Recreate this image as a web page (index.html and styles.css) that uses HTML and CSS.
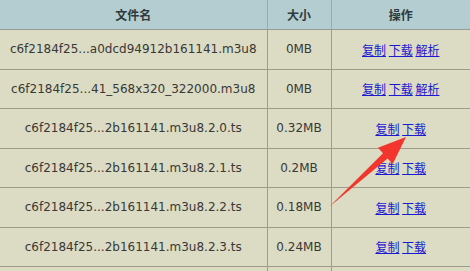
FILE: index.html
```html
<!DOCTYPE html>
<html lang="zh">
<head>
<meta charset="utf-8">
<link rel="stylesheet" href="styles.css">
</head>
<body>
<div class="wrap">
<table class="files">
  <colgroup><col class="c-name"><col class="c-size"><col class="c-op"></colgroup>
  <thead>
    <tr><th>文件名</th><th>大小</th><th>操作</th></tr>
  </thead>
  <tbody>
    <tr><td>c6f2184f25...a0dcd94912b161141.m3u8</td><td>0MB</td><td class="ops"><a href="#">复制</a> <a href="#">下载</a> <a href="#">解析</a></td></tr>
    <tr><td>c6f2184f25...41_568x320_322000.m3u8</td><td>0MB</td><td class="ops"><a href="#">复制</a> <a href="#">下载</a> <a href="#">解析</a></td></tr>
    <tr><td>c6f2184f25...2b161141.m3u8.2.0.ts</td><td>0.32MB</td><td class="ops"><a href="#">复制</a> <a href="#">下载</a></td></tr>
    <tr><td>c6f2184f25...2b161141.m3u8.2.1.ts</td><td>0.2MB</td><td class="ops"><a href="#">复制</a> <a href="#">下载</a></td></tr>
    <tr><td>c6f2184f25...2b161141.m3u8.2.2.ts</td><td>0.18MB</td><td class="ops"><a href="#">复制</a> <a href="#">下载</a></td></tr>
    <tr><td>c6f2184f25...2b161141.m3u8.2.3.ts</td><td>0.24MB</td><td class="ops"><a href="#">复制</a> <a href="#">下载</a></td></tr>
    <tr><td></td><td></td><td></td></tr>
  </tbody>
</table>
<svg class="arrow" width="470" height="271" viewBox="0 0 470 271">
  <polygon points="329,207 383,153.2 377.9,147.7 406,137 392.7,163.9 387.6,158.4" fill="#f2362e"/>
</svg>
</div>
</body>
</html>
```
FILE: styles.css
```css
html, body {
  margin: 0;
  padding: 0;
  background: #dcdbc3;
  overflow: hidden;
}
.wrap {
  position: relative;
  width: 470px;
  height: 271px;
  overflow: hidden;
}
.files {
  width: 470px;
  border-collapse: collapse;
  table-layout: fixed;
  font-family: "DejaVu Sans", "Noto Sans CJK SC", sans-serif;
  font-size: 12px;
  color: #383838;
}
.c-name { width: 267px; }
.c-size { width: 64px; }
.c-op { width: 139px; }
.files th {
  background: #b4cdd1;
  height: 29px;
  padding: 0;
  font-family: "Noto Sans CJK SC", sans-serif;
  font-weight: bold;
  font-size: 12px;
  color: #2f3a3c;
  border-left: 1px solid #9fa9a8;
  border-bottom: 1px solid #989898;
  text-align: center;
}
.files th:first-child, .files td:first-child { border-left: none; }
.files td {
  height: 38.5px;
  padding: 0;
  text-align: center;
  white-space: nowrap;
  border-left: 1px solid #9d9c8a;
  border-bottom: 1px solid #9d9c8a;
}
.ops {
  font-family: "Noto Sans CJK SC", sans-serif;
  font-size: 12px;
}
.ops a {
  color: #1a1ad0;
  text-decoration: underline;
}
.arrow {
  position: absolute;
  left: 0;
  top: 0;
  pointer-events: none;
}
```
